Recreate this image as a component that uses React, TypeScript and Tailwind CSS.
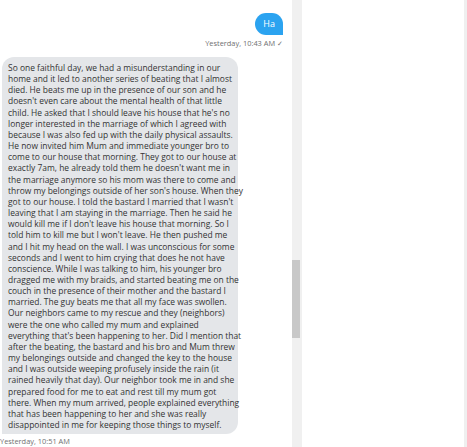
import React from "react";

const lines = [
  "So one faithful day, we had a misunderstanding in our",
  "home and it led to another series of beating that I almost",
  "died. He beats me up in the presence of our son and he",
  "doesn't even care about the mental health of that little",
  "child. He asked that I should leave his house that he's no",
  "longer interested in the marriage of which I agreed with",
  "because I was also fed up with the daily physical assaults.",
  "He now invited him Mum and immediate younger bro to",
  "come to our house that morning. They got to our house at",
  "exactly 7am, he already told them he doesn't want me in",
  "the marriage anymore so his mom was there to come and",
  "throw my belongings outside of her son's house. When they",
  "got to our house. I told the bastard I married that I wasn't",
  "leaving that I am staying in the marriage. Then he said he",
  "would kill me if I don't leave his house that morning. So I",
  "told him to kill me but I won't leave. He then pushed me",
  "and I hit my head on the wall. I was unconscious for some",
  "seconds and I went to him crying that does he not have",
  "conscience. While I was talking to him, his younger bro",
  "dragged me with my braids, and started beating me on the",
  "couch in the presence of their mother and the bastard I",
  "married. The guy beats me that all my face was swollen.",
  "Our neighbors came to my rescue and they (neighbors)",
  "were the one who called my mum and explained",
  "everything that's been happening to her. Did I mention that",
  "after the beating, the bastard and his bro and Mum threw",
  "my belongings outside and changed the key to the house",
  "and I was outside weeping profusely inside the rain (it",
  "rained heavily that day). Our neighbor took me in and she",
  "prepared food for me to eat and rest till my mum got",
  "there. When my mum arrived, people explained everything",
  "that has been happening to her and she was really",
  "disappointed in me for keeping those things to myself.",
];

export default function App() {
  return (
    <div
      className="flex h-[447px] w-[467px] overflow-hidden bg-white"
      style={{ fontFamily: '"Open Sans", "Liberation Sans", sans-serif' }}
    >
      <div className="flex w-[292px] flex-col">
        <div className="flex flex-col items-end pr-[9px] pt-[13px]">
          <div className="flex h-[22px] items-center rounded-[12px] rounded-br-none bg-[#2ba3f0] px-[8px] text-[9px] text-white">
            Ha
          </div>
          <div className="mt-[2px] text-[7.4px] leading-[12px] text-[#707070]">
            Yesterday, 10:43 AM ✓
          </div>
        </div>
        <div className="ml-[2px] mt-[8px] w-[236px] rounded-[12px] rounded-bl-none bg-[#e4e6e9] pb-[4px] pl-[6px] pr-[4px] pt-[5px] text-[8.45px] leading-[11.15px] text-[#333333]">
          {lines.map((l, i) => (
            <div key={i} className="whitespace-nowrap">
              {l}
            </div>
          ))}
        </div>
        <div className="mt-[1px] text-[7.4px] leading-[12px] text-[#707070]">
          Yesterday, 10:51 AM
        </div>
      </div>
      <div className="flex w-[10px] flex-col bg-[#f0f0f0]">
        <div className="h-[260px]" />
        <div className="h-[78px] w-[8px] bg-[#c8c8c8]" />
      </div>
      <div className="flex-1 bg-white" />
      <div className="w-[3px] bg-[#efefef]" />
    </div>
  );
}
